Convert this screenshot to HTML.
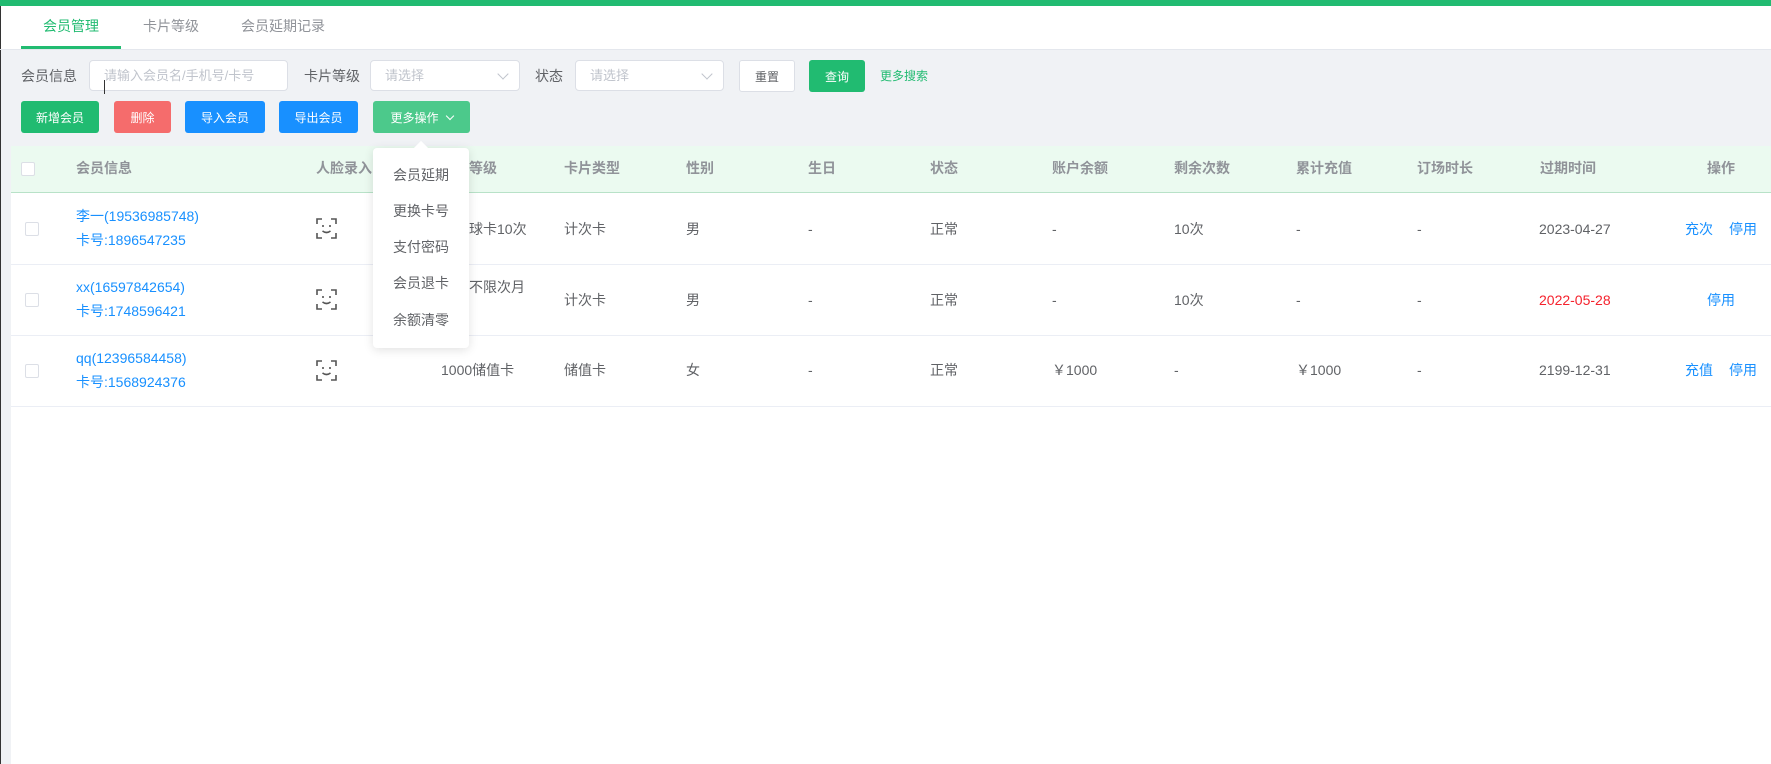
<!DOCTYPE html>
<html><head><meta charset="utf-8"><style>
*{margin:0;padding:0;box-sizing:border-box}
body{width:1771px;height:764px;overflow:hidden;background:#fff;font-family:"Liberation Sans","Noto Sans CJK SC",sans-serif;font-size:14px;color:#606266;position:relative}
.a{position:absolute;white-space:nowrap;line-height:20px}
.btn{position:absolute;top:101px;height:32px;border-radius:3px;color:#fff;font-size:12px;display:flex;align-items:center;justify-content:center}
.inp{position:absolute;top:60px;height:31px;border:1px solid #dcdfe6;border-radius:4px;background:#fff;color:#c0c4cc;font-size:13px;padding-left:14px;line-height:29px}
.arr{position:absolute;right:12px;top:9px;width:8px;height:8px;border-right:1px solid #c0c4cc;border-bottom:1px solid #c0c4cc;transform:rotate(45deg)}
.th{position:absolute;top:158px;font-size:14px;color:#909399;font-weight:bold;line-height:20px;white-space:nowrap}
.cb{position:absolute;width:14px;height:14px;border:1px solid #dcdfe6;border-radius:2px;background:#fff}
.blue{color:#1890ff}
.dd{position:absolute;left:0;width:96px;text-align:center;font-size:14px;color:#606266;line-height:20px}
</style></head><body>
<div class="a" style="left:0;top:0;width:1771px;height:6px;background:#21bb71"></div>
<div class="a" style="left:0;top:6px;width:1px;height:758px;background:#333"></div>
<div class="a" style="left:0;top:50px;width:1771px;height:714px;background:#f0f2f5"></div>
<div class="a" style="left:0;top:49px;width:1771px;height:1px;background:#e4e7ed"></div>
<div class="a" style="left:0;top:50px;width:1px;height:714px;background:#333"></div>
<div class="a" style="left:43px;top:16px;color:#21bb71">会员管理</div>
<div class="a" style="left:21px;top:46px;width:100px;height:3px;background:#21bb71"></div>
<div class="a" style="left:143px;top:16px;color:#909399">卡片等级</div>
<div class="a" style="left:241px;top:16px;color:#909399">会员延期记录</div>

<div class="a" style="left:21px;top:66px">会员信息</div>
<div class="inp" style="left:89px;width:199px">请输入会员名/手机号/卡号</div>
<div class="a" style="left:104px;top:80px;width:1px;height:14px;background:#333"></div>
<div class="a" style="left:304px;top:66px">卡片等级</div>
<div class="inp" style="left:370px;width:150px">请选择<span class="arr"></span></div>
<div class="a" style="left:535px;top:66px">状态</div>
<div class="inp" style="left:575px;width:149px">请选择<span class="arr"></span></div>
<div class="btn" style="left:739px;top:60px;width:56px;height:32px;background:#fff;border:1px solid #dcdfe6;color:#606266">重置</div>
<div class="btn" style="left:809px;top:60px;width:56px;height:32px;background:#21bb71">查询</div>
<div class="a" style="left:880px;top:66px;font-size:12px;color:#21bb71">更多搜索</div>

<div class="btn" style="left:21px;width:78px;background:#21bb71">新增会员</div>
<div class="btn" style="left:114px;width:57px;background:#f56c6c">删除</div>
<div class="btn" style="left:185px;width:80px;background:#1890ff">导入会员</div>
<div class="btn" style="left:279px;width:79px;background:#1890ff">导出会员</div>
<div class="btn" style="left:373px;width:97px;background:#4cc98b">更多操作 <span style="display:inline-block;width:6px;height:6px;border-right:1px solid #fff;border-bottom:1px solid #fff;transform:rotate(45deg);margin:-3px 0 0 8px"></span></div>

<div class="a" style="left:11px;top:146px;width:1760px;height:618px;background:#fff"></div>
<div class="a" style="left:11px;top:146px;width:1760px;height:47px;background:#ebfaf0;border-bottom:1px solid #b8e2c8"></div>
<div class="cb" style="left:21px;top:162px"></div>
<div class="th" style="left:76px">会员信息</div>
<div class="th" style="left:316px">人脸录入</div>
<div class="th" style="left:441px">卡片等级</div>
<div class="th" style="left:564px">卡片类型</div>
<div class="th" style="left:686px">性别</div>
<div class="th" style="left:808px">生日</div>
<div class="th" style="left:930px">状态</div>
<div class="th" style="left:1052px">账户余额</div>
<div class="th" style="left:1174px">剩余次数</div>
<div class="th" style="left:1296px">累计充值</div>
<div class="th" style="left:1417px">订场时长</div>
<div class="th" style="left:1540px">过期时间</div>
<div class="th" style="left:1707px">操作</div>

<div class="a" style="left:11px;top:264px;width:1760px;height:1px;background:#ebeef5"></div>
<div class="a" style="left:11px;top:335px;width:1760px;height:1px;background:#ebeef5"></div>
<div class="a" style="left:11px;top:406px;width:1760px;height:1px;background:#ebeef5"></div>

<!-- row1 -->
<div class="cb" style="left:25px;top:222px"></div>
<div class="a blue" style="left:76px;top:206px">李一(19536985748)</div>
<div class="a blue" style="left:76px;top:230px">卡号:1896547235</div>
<div class="a" style="left:441px;top:219px">羽毛球卡10次</div>
<div class="a" style="left:564px;top:219px">计次卡</div>
<div class="a" style="left:686px;top:219px">男</div>
<div class="a" style="left:808px;top:219px">-</div>
<div class="a" style="left:930px;top:219px">正常</div>
<div class="a" style="left:1052px;top:219px">-</div>
<div class="a" style="left:1174px;top:219px">10次</div>
<div class="a" style="left:1296px;top:219px">-</div>
<div class="a" style="left:1417px;top:219px">-</div>
<div class="a" style="left:1539px;top:219px">2023-04-27</div>
<div class="a blue" style="left:1685px;top:219px">充次</div>
<div class="a blue" style="left:1729px;top:219px">停用</div>
<!-- row2 -->
<div class="cb" style="left:25px;top:293px"></div>
<div class="a blue" style="left:76px;top:277px">xx(16597842654)</div>
<div class="a blue" style="left:76px;top:301px">卡号:1748596421</div>
<div class="a" style="left:441px;top:277px">年卡不限次月</div>
<div class="a" style="left:564px;top:290px">计次卡</div>
<div class="a" style="left:686px;top:290px">男</div>
<div class="a" style="left:808px;top:290px">-</div>
<div class="a" style="left:930px;top:290px">正常</div>
<div class="a" style="left:1052px;top:290px">-</div>
<div class="a" style="left:1174px;top:290px">10次</div>
<div class="a" style="left:1296px;top:290px">-</div>
<div class="a" style="left:1417px;top:290px">-</div>
<div class="a" style="left:1539px;top:290px;color:#f5222d">2022-05-28</div>
<div class="a blue" style="left:1707px;top:290px">停用</div>
<!-- row3 -->
<div class="cb" style="left:25px;top:364px"></div>
<div class="a blue" style="left:76px;top:348px">qq(12396584458)</div>
<div class="a blue" style="left:76px;top:372px">卡号:1568924376</div>
<div class="a" style="left:441px;top:360px">1000储值卡</div>
<div class="a" style="left:564px;top:360px">储值卡</div>
<div class="a" style="left:686px;top:360px">女</div>
<div class="a" style="left:808px;top:360px">-</div>
<div class="a" style="left:930px;top:360px">正常</div>
<div class="a" style="left:1052px;top:360px">￥1000</div>
<div class="a" style="left:1174px;top:360px">-</div>
<div class="a" style="left:1296px;top:360px">￥1000</div>
<div class="a" style="left:1417px;top:360px">-</div>
<div class="a" style="left:1539px;top:360px">2199-12-31</div>
<div class="a blue" style="left:1685px;top:360px">充值</div>
<div class="a blue" style="left:1729px;top:360px">停用</div>

<!-- face icons -->
<svg class="a" style="left:316px;top:218px" width="21" height="21" viewBox="0 0 21 21" fill="none" stroke="#555" stroke-width="1.6">
<path d="M1 6V1h5M15 1h5v5M20 15v5h-5M6 20H1v-5"/><path d="M7 7v2M14 7v2"/><path d="M6.5 13q4 3 8 0"/></svg>
<svg class="a" style="left:316px;top:289px" width="21" height="21" viewBox="0 0 21 21" fill="none" stroke="#555" stroke-width="1.6">
<path d="M1 6V1h5M15 1h5v5M20 15v5h-5M6 20H1v-5"/><path d="M7 7v2M14 7v2"/><path d="M6.5 13q4 3 8 0"/></svg>
<svg class="a" style="left:316px;top:360px" width="21" height="21" viewBox="0 0 21 21" fill="none" stroke="#555" stroke-width="1.6">
<path d="M1 6V1h5M15 1h5v5M20 15v5h-5M6 20H1v-5"/><path d="M7 7v2M14 7v2"/><path d="M6.5 13q4 3 8 0"/></svg>

<!-- dropdown -->
<div class="a" style="left:373px;top:148px;width:96px;height:200px;background:#fff;border-radius:4px;box-shadow:0 2px 10px rgba(0,0,0,.12)">
<div class="a" style="left:43px;top:-5px;width:10px;height:10px;background:#fff;transform:rotate(45deg)"></div>
<div class="dd" style="top:17px">会员延期</div>
<div class="dd" style="top:53px">更换卡号</div>
<div class="dd" style="top:89px">支付密码</div>
<div class="dd" style="top:125px">会员退卡</div>
<div class="dd" style="top:162px">余额清零</div>
</div>
</body></html>
